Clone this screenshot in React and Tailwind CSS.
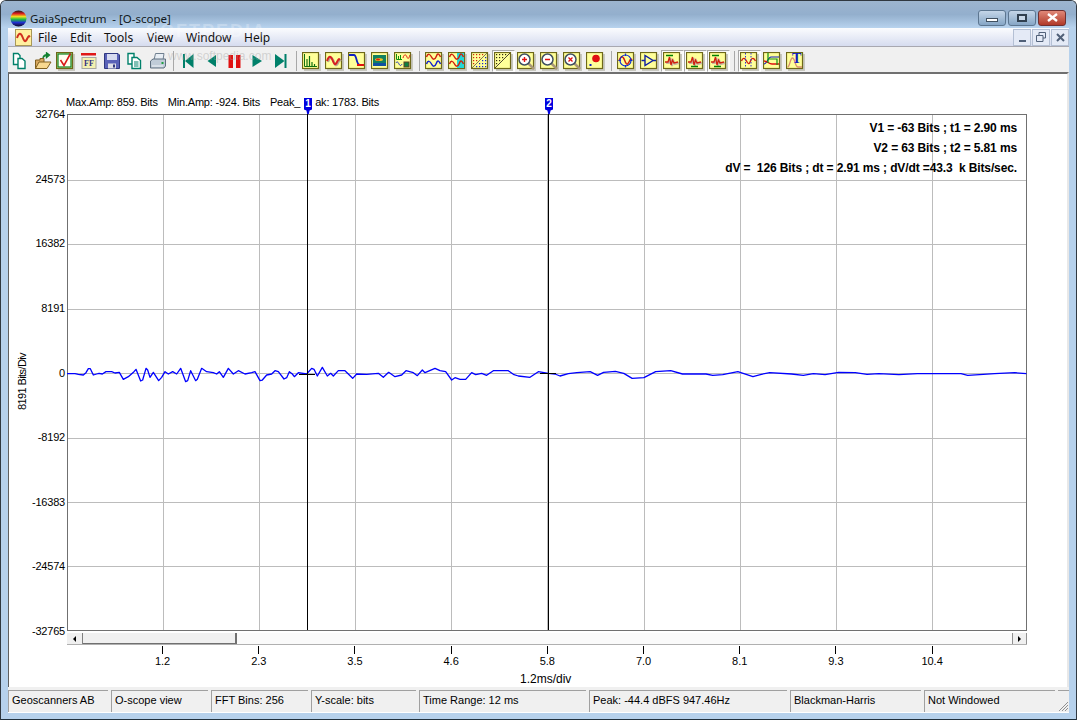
import React from 'react';

const TEAL = '#00806a';

// waveform traced from the scope trace, in page pixels
const zoomA = [[21,71],[45,71],[55,73],[70,75],[78,68],[85,56],[91,56],[100,75],[110,72],[117,70],[127,72],[138,65],[155,65],[165,69],[178,67],[190,88],[205,80],[222,65],[228,58],[242,93],[248,90],[258,55],[263,60],[270,82],[280,67],[296,92],[305,82],[315,65],[325,72],[338,65],[350,72],[362,55],[377,95],[383,92],[392,62],[407,92],[412,88],[425,55],[440,65],[460,68],[470,72],[478,65],[490,82],[505,55],[520,72],[535,62],[555,72],[575,68],[585,65],[600,92],[607,90],[620,75],[635,72],[645,62],[655,65],[672,87],[680,83],[688,65],[697,72],[703,80],[715,68]];
const zoomB = [[20,72],[35,55],[42,58],[52,78],[67,52],[82,78],[92,70],[100,78],[115,62],[135,62],[158,85],[170,72],[200,73],[235,70],[250,82],[266,67],[285,80],[305,75],[318,62],[340,68],[352,77],[367,60],[375,68],[405,55],[420,62],[437,65],[455,90],[465,83],[480,88],[497,88],[515,68],[527,74],[545,70],[560,76],[580,62],[625,62],[640,73],[655,78],[690,82],[715,65],[745,70],[765,72],[780,78]];
const zoomC = [[25,71],[50,68],[90,65],[112,76],[130,67],[165,64],[190,70],[215,85],[250,83],[285,65],[330,62],[365,72],[435,72],[455,76],[485,74],[530,65],[575,80],[600,73],[625,68],[690,72],[725,76],[755,71],[790,74],[830,67],[880,68],[915,73],[950,71],[1010,74],[1065,71],[1195,71],[1215,76],[1250,74],[1295,71],[1355,68],[1390,71]];

const wave = [
  ...zoomA.map(([x, y]) => [60 + x / 3, 350 + y / 3]),
  ...zoomB.map(([x, y]) => [300 + x / 3, 350 + y / 3]),
  ...zoomC.map(([x, y]) => [560 + x / 2.98, 350 + y / 3]),
].map((p) => p.join(',')).join(' ');

const xTicks = ['1.2', '2.3', '3.5', '4.6', '5.8', '7.0', '8.1', '9.3', '10.4'];
const xGrid = [163.5, 259.5, 355.5, 451.5, 547.5, 644.5, 740.5, 836.5, 932.5];
const yGrid = [180, 244, 309, 373, 438, 502, 566];
const yLabels = ['32764', '24573', '16382', '8191', '0', '-8192', '-16383', '-24574', '-32765'];

const Tile = ({ children, bg = '#ffff99' }) => (
  <svg width="19" height="19" viewBox="0 0 19 19">
    <rect x="2" y="2" width="17" height="17" fill="#c8c8c0" />
    <rect x="0.5" y="0.5" width="16" height="16" fill={bg} stroke="#6e6818" strokeWidth="1.2" />
    {children}
  </svg>
);

const Glyph = ({ children }) => (
  <svg width="18" height="18" viewBox="0 0 18 18">{children}</svg>
);

const redWave = 'M2 9 C4 3 6 4 7.5 8 S10 14 12 10 S14 7 15 8';

const BumpWave = ({ top, bottom }) => (
  <Tile>
    <path d="M2 10 L5 10 L6.5 5 L8 13 L9.5 8 L11 11 L15 10" fill="none" stroke="#c8b8a0" strokeWidth="2" transform="translate(1 1)" />
    <path d="M2 10 L5 10 L6.5 5 L8 13 L9.5 8 L11 11 L15 10" fill="none" stroke="#d02010" strokeWidth="1.3" />
    {top && <path d="M3 3.5 H10" stroke="#008000" strokeWidth="1.6" />}
    {bottom && <path d="M5 14.5 H12" stroke="#008000" strokeWidth="1.6" />}
  </Tile>
);

const Magnifier = ({ children }) => (
  <Tile>
    <path d="M11 11 L17 17" stroke="#a89878" strokeWidth="2.5" />
    <circle cx="7.5" cy="7.5" r="5.5" fill="#fff" stroke="#405060" strokeWidth="1.5" />
    {children}
  </Tile>
);

const Dots = ({ color, points }) => (
  <g fill={color}>
    {points.map(([x, y]) => <rect key={`${x}-${y}`} x={x} y={y} width="1.2" height="1.2" />)}
  </g>
);

const upperDots = [[2,2],[5,2],[8,2],[11,2],[2,5],[5,5],[8,5],[2,8],[5,8],[2,11]];
const lowerDots = [[14,5],[11,8],[14,8],[8,11],[11,11],[14,11],[5,14],[8,14],[11,14],[14,14]];

const fileIcons = [
  <Glyph key="new">
    <path d="M2.5 1.5 H7 L9 3.5 V12.5 H2.5 Z" fill="#fff" stroke={TEAL} strokeWidth="1.4" />
    <path d="M7 6.5 H11 L14 9 V16.5 H7 Z" fill="#fff" stroke={TEAL} strokeWidth="1.4" />
  </Glyph>,
  <Glyph key="open">
    <path d="M1.5 8 H6 V6.5 H10 V16.5 H1.5 Z" fill="#d8a860" stroke="#806020" />
    <path d="M1.5 16.5 L5 10 H17 L13 16.5 Z" fill="#f8d890" stroke="#806020" />
    <path d="M9 6 C9 3 12 2 14 3 M12.5 0.8 L15.5 3 L12.5 5.5 Z" fill="#209040" stroke="#108030" strokeWidth="1.3" />
  </Glyph>,
  <Tile key="check" bg="#d8e8a0">
    <rect x="2" y="2" width="13" height="13" fill="#fffff0" stroke="#108020" strokeWidth="1.2" />
    <path d="M4.5 8 L8 13.5 L14.5 1.5" fill="none" stroke="#d81818" strokeWidth="1.6" />
  </Tile>,
  <Glyph key="ff">
    <rect x="1" y="1" width="15" height="2.5" fill="#e01818" />
    <rect x="2" y="5.5" width="14" height="11" fill="#f4f0b0" stroke="#a8a8a0" />
    <text x="4" y="14" fontFamily="Liberation Serif, serif" fontWeight="700" fontSize="8" fill="#303080">FF</text>
  </Glyph>,
  <Glyph key="save">
    <path d="M1.5 1.5 H15 L16.5 3 V16.5 H1.5 Z" fill="#5a62b8" stroke="#303880" />
    <rect x="4" y="2" width="10" height="6" fill="#d8dcf0" />
    <rect x="5" y="11.5" width="8" height="5" fill="#e0e0e8" />
    <rect x="10" y="12.5" width="2" height="3" fill="#303880" />
  </Glyph>,
  <Glyph key="copy">
    <path d="M2 1.5 H8 V12 H2 Z" fill="#fff" stroke={TEAL} strokeWidth="1.4" />
    <path d="M6 5.5 H11 L14.5 8.5 V16.5 H6 Z" fill="#fff" stroke={TEAL} strokeWidth="1.4" />
    <path d="M8 10 H12.5 M8 12 H12.5 M8 14 H12.5" stroke={TEAL} />
  </Glyph>,
  <Glyph key="print">
    <path d="M5 8 L6.5 1.5 H15 L14 8 Z" fill="#e8eef4" stroke="#708090" />
    <path d="M1.5 9 L4 7 H16.5 V14 L15 16 H1.5 Z" fill="#c0ccd8" stroke="#607080" />
    <rect x="12.5" y="10" width="2" height="2" fill="#20a040" />
    <path d="M3 14 H14" stroke="#f0f4f8" />
  </Glyph>,
];

const transportIcons = [
  <Glyph key="first"><rect x="3" y="2" width="2" height="14" fill={TEAL} /><path d="M13.5 2 V16 L5 9 Z" fill={TEAL} /></Glyph>,
  <Glyph key="back"><path d="M13 3 V15 L4.5 9 Z" fill={TEAL} /></Glyph>,
  <Glyph key="pause"><rect x="2.5" y="3" width="4.5" height="13" fill="#e01010" /><rect x="10" y="3" width="4.5" height="13" fill="#e01010" /></Glyph>,
  <Glyph key="play"><path d="M3.5 3 V15 L13 9 Z" fill={TEAL} /></Glyph>,
  <Glyph key="last"><path d="M3 2 V16 L12.5 9 Z" fill={TEAL} /><rect x="12.5" y="2" width="2" height="14" fill={TEAL} /></Glyph>,
];

const viewIcons = [
  <Tile key="bars"><path d="M2.5 2 V14.5 H15" fill="none" stroke="#107010" /><path d="M5 14 V7 M7.5 14 V4 M10 14 V10 M12.5 14 V12" stroke="#107010" strokeWidth="1.2" /></Tile>,
  <Tile key="wave"><path d={redWave} fill="none" stroke="#b8a890" strokeWidth="2.2" transform="translate(1 1)" /><path d={redWave} fill="none" stroke="#d82020" strokeWidth="2" /></Tile>,
  <Tile key="step"><path d="M1 3 H6 C9 3 8 13 12 13" fill="none" stroke="#1020c0" strokeWidth="1.8" /><path d="M9 13 H16" stroke="#e01010" strokeWidth="1.8" /></Tile>,
  <Tile key="thermal">
    <rect x="2" y="3" width="13" height="11" fill="#108060" />
    <rect x="2" y="11" width="13" height="3" fill="#1050a0" />
    <ellipse cx="8" cy="7.5" rx="4" ry="1.6" fill="#e8c020" />
    <ellipse cx="7" cy="7.5" rx="2" ry="0.9" fill="#e02010" />
  </Tile>,
  <Tile key="multi">
    <path d="M2.5 2 V7.5 H8 M4.5 7 V4 M6.5 7 V3" fill="none" stroke="#109010" />
    <path d="M9 6 C10 2 12 2 13 5 S15 6 16 3" fill="none" stroke="#e02010" />
    <path d="M2 11 C3 9 4 10 5 12 S7 14 8 12" fill="none" stroke="#2030c0" />
    <rect x="10" y="10" width="5" height="5" fill="#108040" stroke="#604020" />
  </Tile>,
];

const traceIcons = [
  <Tile key="both">
    <path d="M1.5 5 C3 1 5 2 6.5 5 S10 8 11.5 4 S14.5 3 15.5 5" fill="none" stroke="#d02010" strokeWidth="1.5" />
    <path d="M1.5 12 C3 8 5 9 6.5 12 S10 15 11.5 11 S14.5 10 15.5 12" fill="none" stroke="#1020d0" strokeWidth="1.5" />
  </Tile>,
  <Tile key="cyan">
    <rect x="9" y="1" width="7" height="15" fill="#20d8d8" />
    <path d="M1.5 5 C3 1 5 2 6.5 5 S10 8 11.5 4 S14.5 3 15.5 5" fill="none" stroke="#d02010" strokeWidth="1.5" />
    <path d="M1.5 12 C3 8 5 9 6.5 12 S10 15 11.5 11 S14.5 10 15.5 12" fill="none" stroke="#d02010" strokeWidth="1.5" />
  </Tile>,
  <Tile key="rb-dots"><path d="M1 16 L16 1" stroke="#807850" /><Dots color="#d02010" points={upperDots} /><Dots color="#1020d0" points={lowerDots} /></Tile>,
  <Tile key="bk-dots"><path d="M1 16 L16 1" stroke="#504830" /><Dots color="#302810" points={upperDots} /></Tile>,
  <Magnifier key="in"><path d="M5 7.5 H10 M7.5 5 V10" stroke="#e01010" strokeWidth="1.4" /></Magnifier>,
  <Magnifier key="out"><path d="M5 7.5 H10" stroke="#e01010" strokeWidth="1.6" /></Magnifier>,
  <Magnifier key="x"><path d="M5.5 5.5 L9.5 9.5 M9.5 5.5 L5.5 9.5" stroke="#e01010" strokeWidth="1.3" /></Magnifier>,
  <Tile key="ball"><circle cx="10" cy="6.5" r="3.8" fill="#e01010" /><rect x="3.5" y="12" width="2" height="2" fill="#1020c0" /></Tile>,
];

const ampIcons = [
  { pressed: false, icon: (
    <Tile key="cross">
      <path d={redWave} fill="none" stroke="#d02010" strokeWidth="1.5" />
      <circle cx="8.5" cy="8.5" r="5.5" fill="none" stroke="#1030d0" strokeWidth="1.2" />
      <path d="M8.5 1.5 V4 M8.5 13 V15.5 M1.5 8.5 H4 M13 8.5 H15.5" stroke="#1030d0" strokeWidth="1.2" />
    </Tile>
  ) },
  { pressed: false, icon: (
    <Tile key="amp"><path d="M5 3.5 V13.5 L13 8.5 Z M1.5 8.5 H5 M13 8.5 H16" fill="none" stroke="#1020a0" strokeWidth="1.4" /></Tile>
  ) },
  { pressed: true, icon: <BumpWave top /> },
  { pressed: true, icon: <BumpWave bottom /> },
  { pressed: true, icon: <BumpWave top bottom /> },
];

const lastIcons = [
  { pressed: true, icon: (
    <Tile key="cursor">
      <path d="M1.5 9 C3 5 5 6 6.5 9 S9 13 10.5 9 S14 6 15.5 9" fill="none" stroke="#d02010" strokeWidth="1.4" />
      <path d="M5.5 1 V16 M11 1 V16" stroke="#3030d0" strokeDasharray="1.5 1.5" />
    </Tile>
  ) },
  { pressed: false, icon: (
    <Tile key="lines">
      <path d="M1 12 C4 12 5 5 8 5 H16" fill="none" stroke="#1020c0" strokeWidth="1.2" />
      <path d="M1 9 C4 9 6 12 9 12 H16" fill="none" stroke="#e01010" strokeWidth="1.4" />
      <path d="M5 1 V11 M5 7 H14 V13" fill="none" stroke="#109010" strokeWidth="1.2" />
    </Tile>
  ) },
  { pressed: false, icon: (
    <Tile key="text">
      <path d="M1.5 15 C4 15 4 6 6.5 6 S9 15 12 15 H16" fill="none" stroke="#d89070" strokeWidth="1.3" />
      <text x="6" y="11" fontFamily="Liberation Serif, serif" fontWeight="700" fontSize="14" fill="#1020c0">T</text>
    </Tile>
  ) },
];

const ToolButton = ({ children, pressed }) => (
  <div className={`w-[23px] h-[22px] flex items-center justify-center ${pressed ? 'border border-t-[#a8a8a8] border-l-[#a8a8a8] border-r-white border-b-white bg-[#fafafa]' : ''}`}>
    {children}
  </div>
);

const Separator = () => (
  <div className="w-[8px] h-[20px] flex justify-center">
    <div className="w-[1px] h-full bg-[#a8a8a8]" />
  </div>
);

const CursorFlag = ({ left, children }) => (
  <div className={`absolute ${left} -top-[16px] w-[8px] h-[16px] bg-[#0000e0] text-white text-[10px] font-bold leading-[12px] text-center [clip-path:polygon(0_0,100%_0,100%_72%,70%_78%,60%_100%,40%_100%,30%_78%,0_72%)]`}>
    {children}
  </div>
);

const SpectrumLogo = () => (
  <svg width="17" height="17" viewBox="0 0 17 17">
    <defs>
      <linearGradient id="spectrum" x1="0" y1="0" x2="0" y2="1">
        <stop offset="0" stopColor="#181818" />
        <stop offset="0.2" stopColor="#e02020" />
        <stop offset="0.38" stopColor="#f0e020" />
        <stop offset="0.55" stopColor="#20c040" />
        <stop offset="0.75" stopColor="#2030d0" />
        <stop offset="1" stopColor="#100820" />
      </linearGradient>
    </defs>
    <circle cx="8.5" cy="8.5" r="8" fill="url(#spectrum)" />
  </svg>
);

const StatusItem = ({ width, children }) => (
  <div className={`${width} h-full border-l border-t border-[#a0a0a0] pl-[3px] pb-[3px] flex items-center whitespace-pre`}>
    {children}
  </div>
);

const App = () => {
  return (
    <div className="relative w-[1077px] h-[720px] overflow-hidden flex flex-col rounded-t-[6px] border-t border-x border-[#303840] bg-[#b6d1ec] font-['Liberation_Sans',sans-serif] text-[11px] text-black">

      {/* Title bar */}
      <div className="h-[27px] shrink-0 flex items-center -mx-[1px] pl-[10px] pr-[11px] bg-gradient-to-b from-[#9db5cf] via-[#93afcd] to-[#b8d3ee]">
        <div className="mt-[7px] mr-[3px]"><SpectrumLogo /></div>
        <span className="mt-[8px] font-['Noto_Sans',sans-serif] text-[11.5px] text-[#101820] whitespace-pre">GaiaSpectrum  - [O-scope]</span>
        <div className="ml-auto flex gap-[2px] mt-[6px]">
          <div className="w-[28px] h-[16px] rounded-[3px] border border-[#5c7690] bg-gradient-to-b from-[#c4d6e8] to-[#86a6c6] flex items-center justify-center">
            <div className="w-[12px] h-[4px] bg-white border border-[#405060] mt-[4px]" />
          </div>
          <div className="w-[28px] h-[16px] rounded-[3px] border border-[#5c7690] bg-gradient-to-b from-[#c4d6e8] to-[#86a6c6] flex items-center justify-center">
            <div className="w-[10px] h-[8px] border-2 border-[#304050] bg-[#c8d8e8]" />
          </div>
          <div className="w-[28px] h-[16px] rounded-[3px] border border-[#703030] bg-gradient-to-b from-[#e08878] to-[#b03828] flex items-center justify-center">
            <svg width="13" height="9" viewBox="0 0 13 9"><path d="M2 1 L11 8 M11 1 L2 8" stroke="#fff" strokeWidth="2.4" /></svg>
          </div>
        </div>
      </div>

      {/* Window body */}
      <div className="flex-1 flex flex-col pl-[7px] pr-[7px] pb-[6px]">

        {/* Menu bar */}
        <div className="h-[19px] shrink-0 flex items-center border-b border-[#a8a8b0] bg-gradient-to-b from-[#fbfcfe] to-[#d6dcef] font-['Noto_Sans',sans-serif] text-[12px] text-[#101010]">
          <div className="ml-[7px] mr-[6px]">
            <svg width="17" height="17" viewBox="0 0 17 17" className="block">
              <rect x="0.5" y="0.5" width="16" height="16" fill="#fff0a0" stroke="#a89858" />
              <path d={redWave} fill="none" stroke="#d03020" strokeWidth="2" />
            </svg>
          </div>
          <span className="w-[32px] mt-[1px]">File</span>
          <span className="w-[34px] mt-[1px]">Edit</span>
          <span className="w-[43px] mt-[1px]">Tools</span>
          <span className="w-[39px] mt-[1px]">View</span>
          <span className="w-[58px] mt-[1px]">Window</span>
          <span className="mt-[1px]">Help</span>
          <div className="ml-auto flex gap-[1px]">
            <div className="w-[18px] h-[17px] border border-[#b4c0d4] bg-[#e4eaf6] flex items-end justify-center pb-[3px]"><div className="w-[7px] h-[2px] bg-[#506078]" /></div>
            <div className="w-[18px] h-[17px] border border-[#b4c0d4] bg-[#e4eaf6] flex items-center justify-center">
              <svg width="10" height="10" viewBox="0 0 10 10"><path d="M3 3 V0.5 H9.5 V6 H7 M0.5 3.5 H7 V9.5 H0.5 Z" fill="none" stroke="#506078" /></svg>
            </div>
            <div className="w-[18px] h-[17px] border border-[#b4c0d4] bg-[#e4eaf6] flex items-center justify-center">
              <svg width="9" height="9" viewBox="0 0 9 9"><path d="M1 1 L8 8 M8 1 L1 8" stroke="#506078" strokeWidth="2" /></svg>
            </div>
          </div>
        </div>

        {/* Toolbar */}
        <div className="h-[25px] shrink-0 flex items-center pt-[3px] bg-[#f0f0f0]">
          {fileIcons.map((icon, i) => <ToolButton key={i}>{icon}</ToolButton>)}
          <Separator />
          {transportIcons.map((icon, i) => <ToolButton key={i}>{icon}</ToolButton>)}
          <Separator />
          {viewIcons.map((icon, i) => <ToolButton key={i}>{icon}</ToolButton>)}
          <Separator />
          {traceIcons.map((icon, i) => <ToolButton key={i} pressed={i === 3}>{icon}</ToolButton>)}
          <Separator />
          {ampIcons.map((item, i) => <ToolButton key={i} pressed={item.pressed}>{item.icon}</ToolButton>)}
          <Separator />
          {lastIcons.map((item, i) => <ToolButton key={i} pressed={item.pressed}>{item.icon}</ToolButton>)}
        </div>

        {/* Scope view */}
        <div className="flex-1 flex flex-col border-t-2 border-t-[#707070] border-l border-l-[#606060] border-r-2 border-r-[#e8e8e8] bg-white">

          <div className="h-[40px] shrink-0 flex items-end pb-[4px] pl-[57px] whitespace-pre tracking-[-0.2px]">
            <span>Max.Amp: 859. Bits</span>
            <span className="ml-[10px]">Min.Amp: -924. Bits</span>
            <span className="ml-[10px]">Peak_</span>
            <span className="ml-[15px]">ak: 1783. Bits</span>
          </div>

          <div className="flex shrink-0">
            <div className="w-[26px] h-[517px] flex items-center justify-end pr-[5px] pt-[18px]">
              <span className="[writing-mode:vertical-rl] rotate-180 whitespace-pre tracking-[-0.6px]">8191 Bits/Div</span>
            </div>
            <div className="w-[30px] h-[531px] -my-[7px] flex flex-col justify-between items-end tracking-[-0.2px]">
              {yLabels.map((label) => <span key={label} className="h-[14px] leading-[14px] whitespace-pre">{label}</span>)}
            </div>
            <div className="relative w-[960px] h-[517px] ml-[2px]">
              <svg width="960" height="517" viewBox="67 114 960 517" className="block">
                {xGrid.map((x) => <line key={x} x1={x} x2={x} y1="114" y2="630" stroke="#bcbcbc" />)}
                {yGrid.map((y) => <line key={y} x1="67" x2="1026" y1={y + 0.5} y2={y + 0.5} stroke="#bcbcbc" />)}
                <rect x="67.5" y="114.5" width="959" height="516" fill="none" stroke="#707070" />
                <polyline points={wave} fill="none" stroke="#0000ff" strokeWidth="1.3" strokeLinejoin="round" />
                <line x1="299" x2="315" y1="374.5" y2="374.5" stroke="#000" />
                <line x1="540" x2="556" y1="373.5" y2="373.5" stroke="#000" />
                <line x1="307.5" x2="307.5" y1="114" y2="630" stroke="#000" />
                <line x1="548.5" x2="548.5" y1="114" y2="630" stroke="#000" />
              </svg>

              <CursorFlag left="left-[237px]">1</CursorFlag>
              <CursorFlag left="left-[478px]">2</CursorFlag>

              {/* Cursor readout */}
              <div className="absolute right-[10px] top-[4px] flex flex-col items-end text-[12px] font-bold leading-[20px] whitespace-pre tracking-[-0.12px]">
                <span>V1 = -63 Bits ; t1 = 2.90 ms</span>
                <span>V2 = 63 Bits ; t2 = 5.81 ms</span>
                <span>dV =  126 Bits ; dt = 2.91 ms ; dV/dt =43.3  k Bits/sec.</span>
              </div>
            </div>
          </div>

          {/* Scrollbar */}
          <div className="mt-[2px] ml-[58px] w-[960px] h-[12px] shrink-0 flex bg-[#fafafa] border-b border-[#b0b0b0]">
            <div className="w-[16px] h-full flex items-center justify-center bg-[#f0f0f0] border-r border-[#808080]">
              <div className="w-0 h-0 border-y-[3px] border-y-transparent border-r-[3px] border-r-black" />
            </div>
            <div className="w-[154px] h-full bg-[#f0f0f0] border-r-2 border-b border-[#707070]" />
            <div className="flex-1" />
            <div className="w-[15px] h-full flex items-center justify-center bg-[#f0f0f0] border-x border-[#909090]">
              <div className="w-0 h-0 border-y-[3px] border-y-transparent border-l-[3px] border-l-black" />
            </div>
          </div>

          {/* Time axis */}
          <div className="flex shrink-0 ml-[105.5px]">
            {xTicks.map((tick) => (
              <div key={tick} className="w-[96.2px] flex flex-col items-center">
                <div className="w-[1px] h-[8px] bg-black mt-[1px]" />
                <span className="leading-[14px]">{tick}</span>
              </div>
            ))}
          </div>
          <div className="ml-[511px] mt-[4px] text-[12px] leading-[14px]">1.2ms/div</div>
        </div>

        {/* Status bar */}
        <div className="h-[26px] shrink-0 flex items-stretch gap-[3px] pt-[3px] bg-[#f0f0f0] border-b border-white">
          <StatusItem width="w-[100px]">Geoscanners AB</StatusItem>
          <StatusItem width="w-[97px]">O-scope view</StatusItem>
          <StatusItem width="w-[97px]">FFT Bins: 256</StatusItem>
          <StatusItem width="w-[105px]">Y-scale: bits</StatusItem>
          <StatusItem width="w-[167px]">Time Range: 12 ms</StatusItem>
          <StatusItem width="w-[198px]">Peak: -44.4 dBFS 947.46Hz</StatusItem>
          <StatusItem width="w-[131px]">Blackman-Harris</StatusItem>
          <StatusItem width="w-[131px]">Not Windowed</StatusItem>
          <div className="flex-1 border-t border-[#a0a0a0] flex items-end justify-end">
            <svg width="11" height="11" viewBox="0 0 11 11"><path d="M10 1 L1 10 M10 4 L4 10 M10 7 L7 10" stroke="#909090" /></svg>
          </div>
        </div>
      </div>

      {/* bottom frame edge */}
      <div className="h-[1px] -mx-[1px] shrink-0 bg-[#20303c]" />

      {/* Softpedia watermark over the caption */}
      <div className="absolute left-[145px] top-[21px] font-bold text-[18px] tracking-[2px] leading-[18px] text-white/25 pointer-events-none">SOFTPEDIA</div>
      <div className="absolute left-[167px] top-[46px] text-[12px] text-[#a0a0a0]/40 pointer-events-none">www.softpedia.com</div>
    </div>
  )
}

export default App
